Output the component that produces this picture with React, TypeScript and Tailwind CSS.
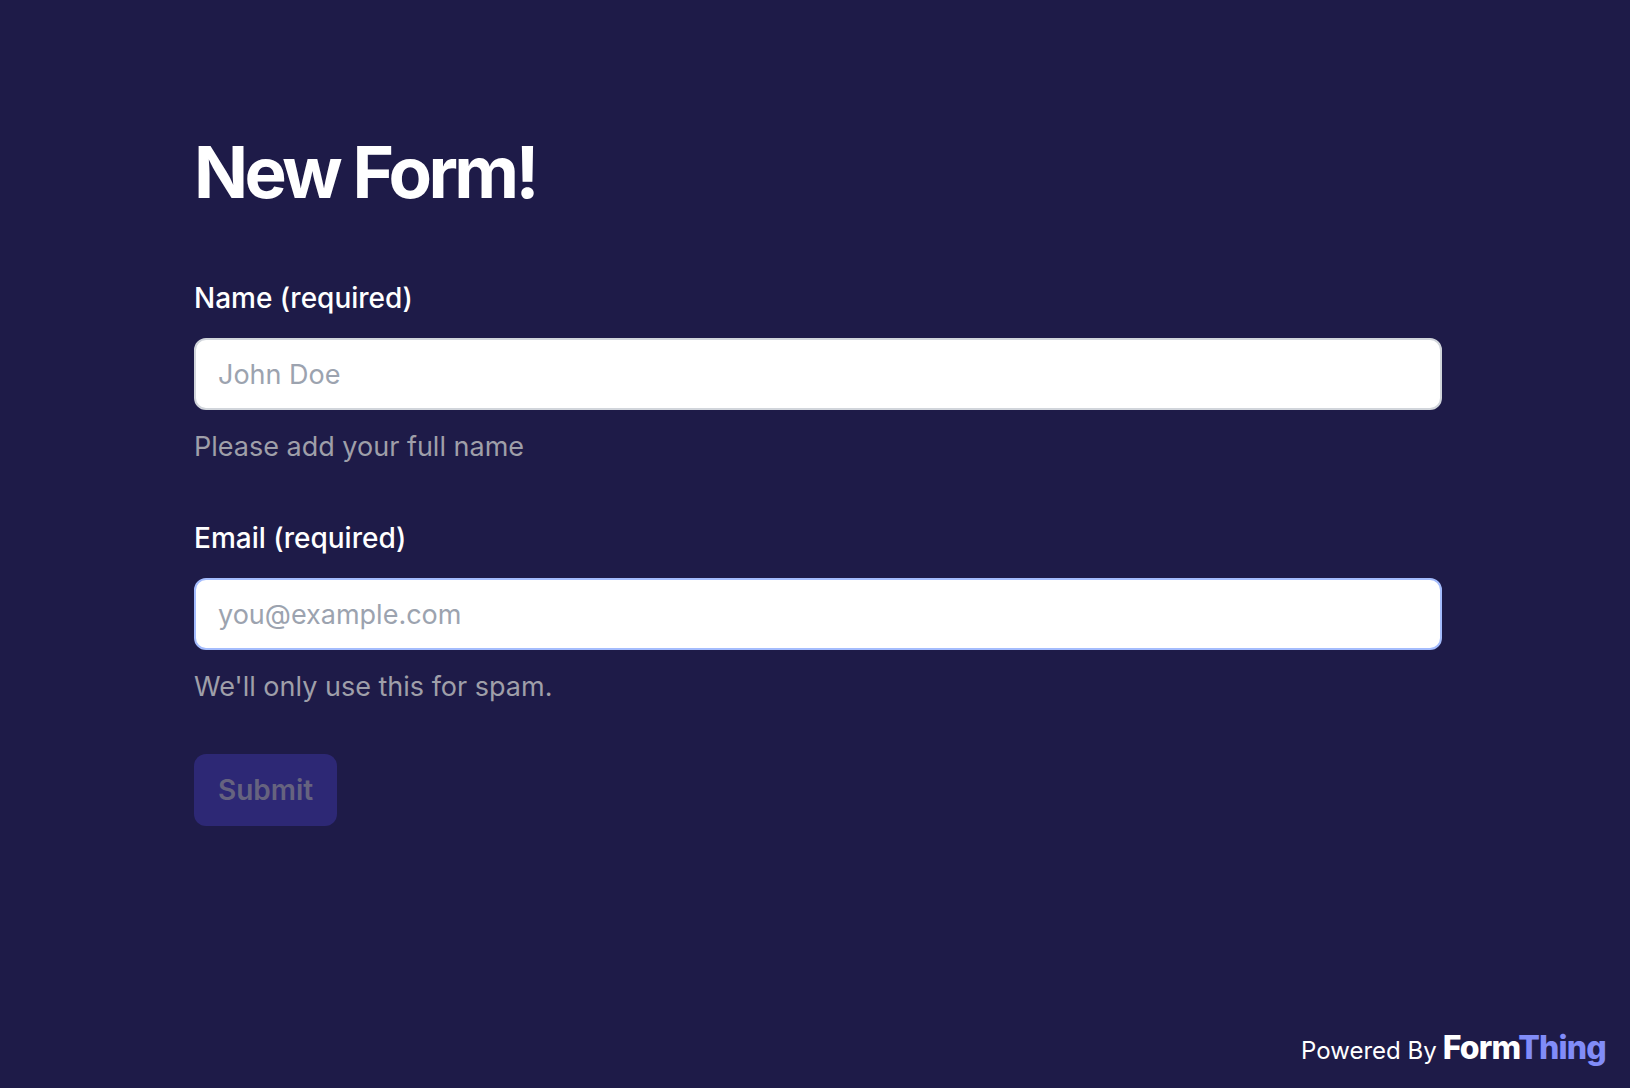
export default function App() {
  const label = 'block text-[28px] leading-[44px] font-medium';
  const input =
    'mt-[18px] block h-[72px] w-full rounded-xl border-2 bg-white px-[22px] text-[27px] text-gray-900 outline-none placeholder:text-[#9ca3af]';
  const help = 'mt-4 text-[27px] leading-[42px] text-[#9f9fa9]';
  return (
    <div className="flex min-h-screen flex-col bg-[#1e1b48] font-['Inter',sans-serif] text-white">
      <main className="w-full grow pt-[124px] pr-[188px] pl-[194px]">
        <h1 className="text-[71px] leading-[96px] font-bold tracking-tighter">New Form!</h1>
        <form className="mt-14 flex flex-col items-start">
          <div className="w-full">
            <label htmlFor="name" className={label}>
              Name (required)
            </label>
            <input id="name" type="text" placeholder="John Doe" aria-describedby="name-help" className={`${input} border-[#d1d5db]`} />
            <p id="name-help" className={help}>Please add your full name</p>
          </div>
          <div className="mt-12 w-full">
            <label htmlFor="email" className={label}>
              Email (required)
            </label>
            <input id="email" type="email" placeholder="you@example.com" aria-describedby="email-help" className={`${input} border-[#a4bcfd]`} />
            <p id="email-help" className={help}>We'll only use this for spam.</p>
          </div>
          <button type="submit" disabled className="mt-[46px] h-[72px] rounded-xl bg-[#2d2875] px-6 text-[28px] font-semibold text-[#66637f]">
            Submit
          </button>
        </form>
      </main>
      <footer className="flex items-baseline justify-end gap-1.5 px-6 pb-5">
        <span className="text-2xl">Powered By</span>
        <a href="#" className="text-[32px] leading-10 font-extrabold tracking-tight">
          Form<span className="text-[#818cf8]">Thing</span>
        </a>
      </footer>
    </div>
  );
}
